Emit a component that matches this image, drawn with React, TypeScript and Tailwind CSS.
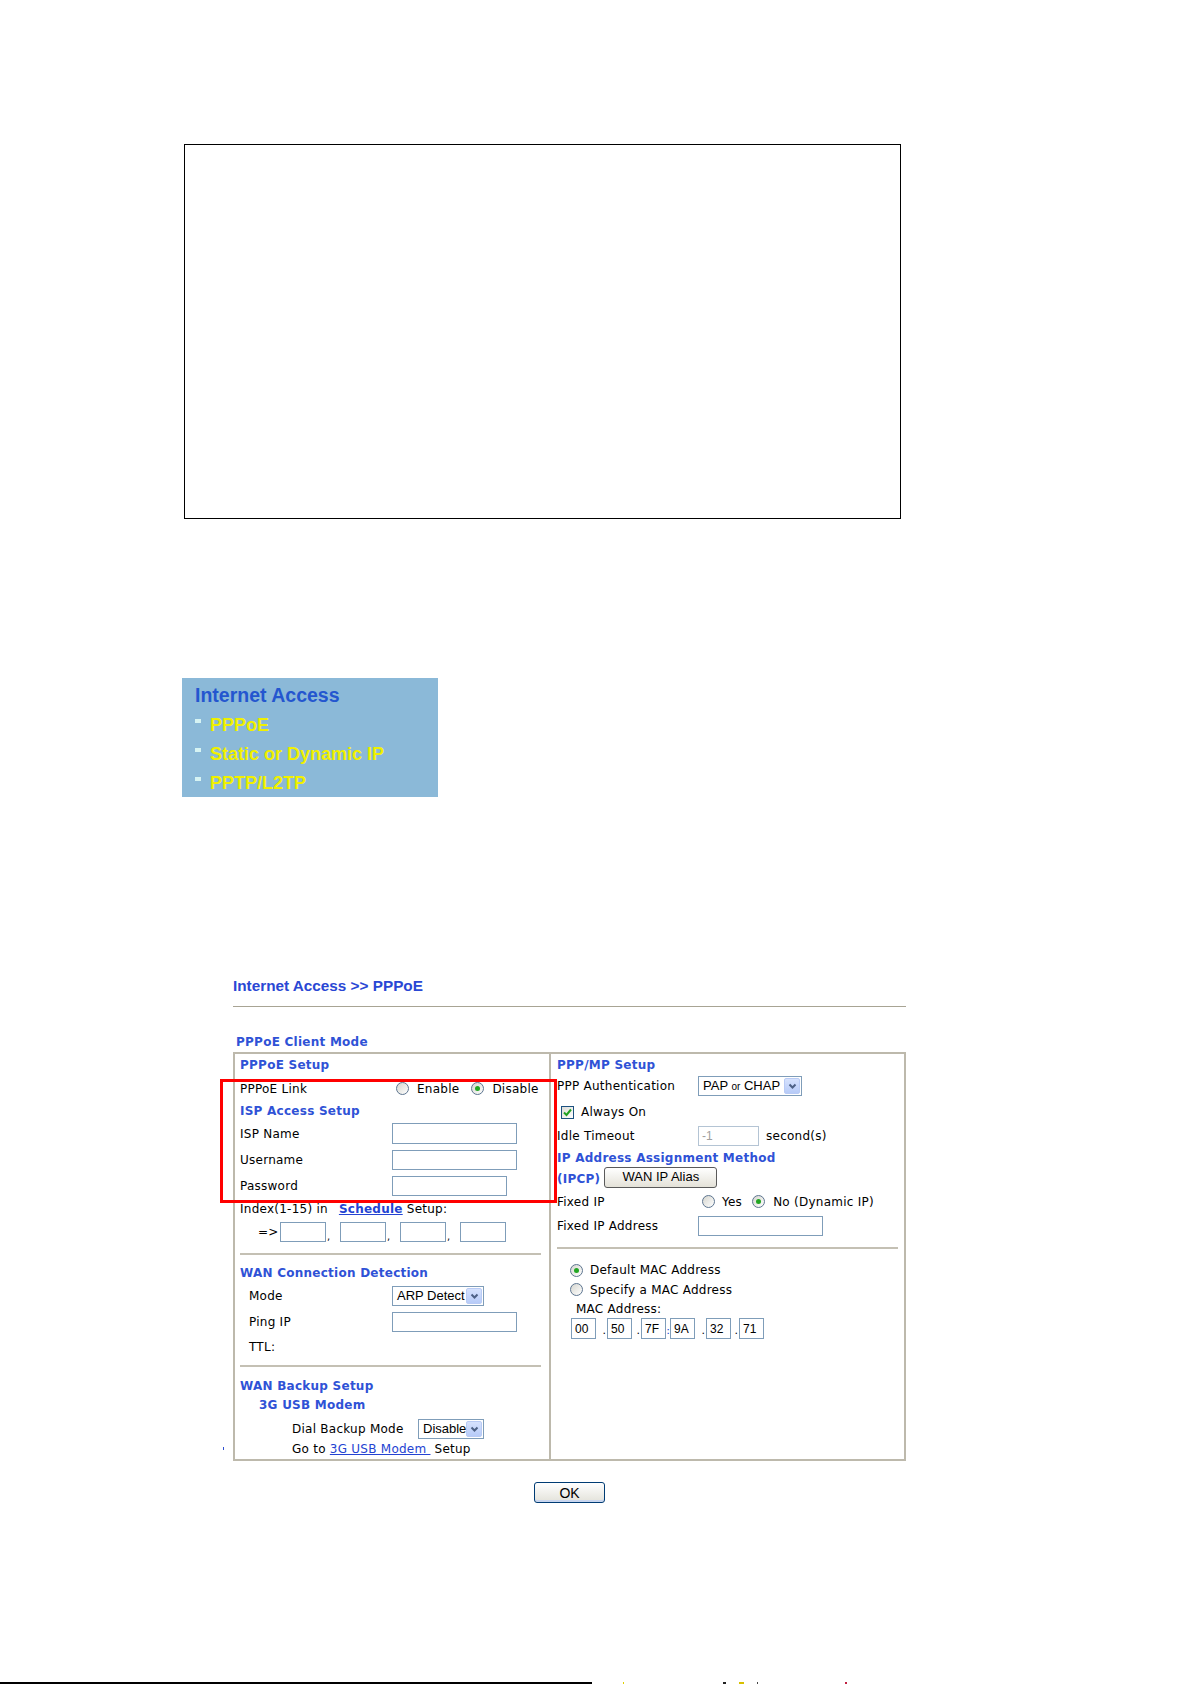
import React from 'react';

const verdana = "font-['DejaVu_Sans',Verdana,sans-serif]";
const arial = "font-['Liberation_Sans',Arial,sans-serif]";

function Heading({ children }: { children: React.ReactNode }) {
  return <span className="text-[12px] font-bold text-[#2f52d6]">{children}</span>;
}

function Radio({ checked }: { checked?: boolean }) {
  return (
    <span className="inline-flex h-[13px] w-[13px] shrink-0 items-center justify-center rounded-full border border-[#5d7590] bg-gradient-to-br from-[#d6d6cf] to-white">
      {checked && <span className="h-[5px] w-[5px] rounded-full bg-[#22a622]" />}
    </span>
  );
}

function Checkbox() {
  return (
    <span className="inline-flex h-[13px] w-[13px] shrink-0 items-center justify-center border border-[#1c5180] bg-gradient-to-br from-[#dcdcd7] to-white">
      <svg width="9" height="9" viewBox="0 0 9 9">
        <path d="M1 4.5 L3.5 7 L8 1.5" fill="none" stroke="#21a121" strokeWidth="2" />
      </svg>
    </span>
  );
}

function TextBox({ className, value, disabled }: { className: string; value?: string; disabled?: boolean }) {
  return (
    <div
      className={`flex items-center border bg-white pl-[3px] text-[12px] tracking-normal ${arial} ${
        disabled ? 'border-[#b4c4d4] text-[#a0a0a0]' : 'border-[#7f9db9] text-black'
      } ${className}`}
    >
      {value}
    </div>
  );
}

function Arrow() {
  return (
    <span className="flex h-[16px] w-[16px] items-center justify-center rounded-[2px] border border-[#b9cbf5] bg-gradient-to-b from-[#d6e2fd] to-[#b7cbf8]">
      <svg width="9" height="7" viewBox="0 0 9 7">
        <path d="M1.5 1.5 L4.5 4.5 L7.5 1.5" fill="none" stroke="#4d6185" strokeWidth="2" />
      </svg>
    </span>
  );
}

function Select({ className, children }: { className: string; children: React.ReactNode }) {
  return (
    <div className={`flex h-[20px] items-center justify-between border border-[#7f9db9] bg-white pl-[4px] pr-[1px] text-[13px] tracking-normal text-black ${arial} ${className}`}>
      <span className="whitespace-nowrap">{children}</span>
      <Arrow />
    </div>
  );
}

function Rule({ className }: { className: string }) {
  return <div className={`h-[2px] bg-[#c4c0b4] ${className}`} />;
}

function LeftColumn() {
  return (
    <div className="flex w-[316px] flex-col border-r-2 border-[#bdb9ac] pl-[5px]">
      <div className="flex h-[22px] items-center">
        <Heading>PPPoE Setup</Heading>
      </div>
      <div className="flex h-[25px] items-center">
        <span className="w-[156px]">PPPoE Link</span>
        <Radio />
        <span className="ml-[8px]">Enable</span>
        <span className="ml-[12px]" />
        <Radio checked />
        <span className="ml-[8px]">Disable</span>
      </div>
      <div className="flex h-[20px] items-center">
        <Heading>ISP Access Setup</Heading>
      </div>
      <div className="flex h-[25px] items-center">
        <span className="w-[152px]">ISP Name</span>
        <TextBox className="h-[21px] w-[125px]" />
      </div>
      <div className="flex h-[27px] items-center">
        <span className="w-[152px]">Username</span>
        <TextBox className="h-[20px] w-[125px]" />
      </div>
      <div className="flex h-[25px] items-center">
        <span className="w-[152px]">Password</span>
        <TextBox className="h-[20px] w-[115px]" />
      </div>
      <div className="flex h-[22px] items-center whitespace-pre">
        <span>Index(1-15) in</span>
        <a className="ml-[11px] font-bold text-[#2443d2] underline">Schedule</a>
        <span> Setup:</span>
      </div>
      <div className="flex h-[24px] items-center pl-[18px]">
        <span className="w-[22px]">=&gt;</span>
        {[0, 1, 2, 3].map((i) => (
          <React.Fragment key={i}>
            <TextBox className="h-[20px] w-[46px]" />
            {i < 3 && <span className="w-[14px] self-end pl-[1px] text-[10px] leading-[14px]">,</span>}
          </React.Fragment>
        ))}
      </div>
      <Rule className="mr-[8px] mt-[9px]" />
      <div className="mt-[8px] flex h-[20px] items-center">
        <Heading>WAN Connection Detection</Heading>
      </div>
      <div className="flex h-[26px] items-center pl-[9px]">
        <span className="w-[143px]">Mode</span>
        <Select className="w-[92px]">ARP Detect</Select>
      </div>
      <div className="flex h-[26px] items-center pl-[9px]">
        <span className="w-[143px]">Ping IP</span>
        <TextBox className="h-[20px] w-[125px]" />
      </div>
      <div className="flex h-[24px] items-center pl-[9px]">
        <span>TTL:</span>
      </div>
      <Rule className="mr-[8px] mt-[6px]" />
      <div className="mt-[9px] flex h-[20px] items-center">
        <Heading>WAN Backup Setup</Heading>
      </div>
      <div className="flex h-[18px] items-center pl-[19px]">
        <Heading>3G USB Modem</Heading>
      </div>
      <div className="mt-[2px] flex h-[26px] items-center pl-[52px]">
        <span className="w-[126px]">Dial Backup Mode</span>
        <Select className="w-[66px]">Disable</Select>
      </div>
      <div className="flex h-[14px] items-center whitespace-pre pl-[52px]">
        <span>Go to </span>
        <a className="text-[#2443d2] underline">3G USB Modem </a>
        <span> Setup</span>
      </div>
    </div>
  );
}

function RightColumn() {
  const mac = [
    { v: '00', sep: '.', w: 'w-[11px]' },
    { v: '50', sep: '.', w: 'w-[9px]' },
    { v: '7F', sep: ':', w: 'w-[4px]' },
    { v: '9A', sep: '.', w: 'w-[11px]' },
    { v: '32', sep: '.', w: 'w-[8px]' },
    { v: '71', sep: '', w: '' },
  ];
  return (
    <div className="flex flex-1 flex-col pl-[6px]">
      <div className="flex h-[21px] items-center">
        <Heading>PPP/MP Setup</Heading>
      </div>
      <div className="flex h-[22px] items-center">
        <span className="w-[141px]">PPP Authentication</span>
        <Select className="w-[104px]">
          PAP <span className="text-[10px]">or</span> CHAP
        </Select>
      </div>
      <div className="mt-[2px] flex h-[26px] items-center pl-[4px]">
        <Checkbox />
        <span className="ml-[7px]">Always On</span>
      </div>
      <div className="flex h-[22px] items-center">
        <span className="w-[141px]">Idle Timeout</span>
        <TextBox className="h-[20px] w-[61px]" value="-1" disabled />
        <span className="ml-[7px]">second(s)</span>
      </div>
      <div className="flex h-[22px] items-center">
        <Heading>IP Address Assignment Method</Heading>
      </div>
      <div className="flex h-[20px] items-center">
        <Heading>(IPCP)</Heading>
        <button
          className={`mb-[4px] ml-[4px] h-[21px] w-[113px] rounded-[3px] border border-[#5a5a5a] bg-gradient-to-b from-white to-[#e4e2d8] text-[13px] leading-[18px] tracking-normal text-black ${arial}`}
        >
          WAN IP Alias
        </button>
      </div>
      <div className="flex h-[25px] items-center">
        <span className="w-[145px]">Fixed IP</span>
        <Radio />
        <span className="ml-[7px]">Yes</span>
        <span className="ml-[10px]" />
        <Radio checked />
        <span className="ml-[8px]">No (Dynamic IP)</span>
      </div>
      <div className="flex h-[24px] items-center">
        <span className="w-[141px]">Fixed IP Address</span>
        <TextBox className="h-[20px] w-[125px]" />
      </div>
      <Rule className="mr-[6px] mt-[9px]" />
      <div className="mt-[11px] flex h-[20px] items-center pl-[13px]">
        <Radio checked />
        <span className="ml-[7px]">Default MAC Address</span>
      </div>
      <div className="flex h-[19px] items-center pl-[13px]">
        <Radio />
        <span className="ml-[7px]">Specify a MAC Address</span>
      </div>
      <div className="mt-[1px] flex h-[18px] items-center pl-[19px]">
        <span>MAC Address:</span>
      </div>
      <div className="flex h-[21px] items-center pl-[14px]">
        {mac.map((m) => (
          <React.Fragment key={m.v}>
            <TextBox className="h-[21px] w-[25px]" value={m.v} />
            {m.sep && (
              <span
                className={`${m.w} self-end text-right text-[11px] leading-[16px] tracking-normal ${m.sep === ':' ? 'text-[#2443d2]' : 'pr-[1px]'}`}
              >
                {m.sep}
              </span>
            )}
          </React.Fragment>
        ))}
      </div>
    </div>
  );
}

export default function App() {
  return (
    <div className="relative h-[1685px] w-[1191px] overflow-hidden bg-white">
      {/* empty framed area */}
      <div className="ml-[184px] mt-[144px] h-[375px] w-[717px] border border-black" />

      {/* menu capture */}
      <div className={`ml-[182px] mt-[159px] h-[119px] w-[256px] bg-[#8bb9d8] pl-[13px] pt-[5px] ${arial}`}>
        <div className="h-[24px] text-[19.5px] font-bold leading-[24px] text-[#2456cf]">Internet Access</div>
        <div className="mt-[4px] flex flex-col">
          {['PPPoE', 'Static or Dynamic IP', 'PPTP/L2TP'].map((t) => (
            <div key={t} className="flex h-[29px] items-center">
              <span className="mb-[9px] h-[4px] w-[6px] bg-[#d6f3f3]" />
              <span className="ml-[9px] text-[18px] font-bold text-[#f0f000]">{t}</span>
            </div>
          ))}
        </div>
      </div>

      {/* web page capture */}
      <div className={`ml-[233px] mt-[180px] w-[673px] text-[12px] tracking-[0.25px] text-black ${verdana}`}>
        <div className={`h-[18px] text-[15.3px] font-bold leading-[18px] tracking-normal text-[#2a47d4] ${arial}`}>
          Internet Access &gt;&gt; PPPoE
        </div>
        <div className="mt-[11px] h-[1px] bg-[#a8a494]" />
        <div className="mt-[28px] h-[14px] pl-[3px] leading-[14px]">
          <Heading>PPPoE Client Mode</Heading>
        </div>
        <div className="mt-[3px] flex h-[409px] border-2 border-[#bdb9ac]">
          <LeftColumn />
          <RightColumn />
        </div>
        <div className="mt-[21px] flex justify-center">
          <button
            className={`h-[21px] w-[71px] rounded-[3px] border border-[#003c74] bg-gradient-to-b from-white to-[#e3e2da] text-[14px] leading-[18px] tracking-normal text-black shadow-[inset_0_-2px_0_#c9d6ef] ${arial}`}
          >
            OK
          </button>
        </div>
      </div>

      <div className="mt-[179px] flex h-[2px] items-center">
        <div className="h-[2px] w-[592px] bg-black" />
        <span className="ml-[31px] h-[2px] w-[1px] bg-[#e0d000]" />
        <span className="ml-[99px] h-[2px] w-[3px] bg-[#222]" />
        <span className="ml-[13px] h-[2px] w-[5px] bg-[#d8c000]" />
        <span className="ml-[13px] h-[2px] w-[1px] bg-[#444]" />
        <span className="ml-[87px] h-[2px] w-[2px] bg-[#c02040]" />
      </div>

      {/* red highlight over the PPPoE link / ISP fields */}
      <div className="absolute left-[220px] top-[1079px] h-[124px] w-[337px] border-[3px] border-[#ff0000]" />
      <div className="absolute left-[223px] top-[1447px] h-[3px] w-[1px] bg-[#3050d0]" />
    </div>
  );
}
